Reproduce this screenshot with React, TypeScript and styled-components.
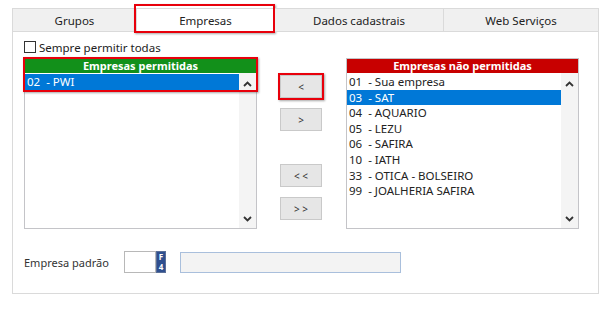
import styled, { createGlobalStyle } from "styled-components";

const GlobalStyle = createGlobalStyle`
  body {
    margin: 0;
    background: #ffffff;
    font-family: "Noto Sans", "Open Sans", sans-serif;
    color: #222222;
  }
`;

const tabs = [
  { label: "Grupos", width: 125 },
  { label: "Empresas", width: 138, active: true },
  { label: "Dados cadastrais", width: 169 },
  { label: "Web Serviços", width: 155 },
];

const permitted = [{ code: "02", name: "PWI", selected: true }];

const notPermitted = [
  { code: "01", name: "Sua empresa" },
  { code: "03", name: "SAT", selected: true },
  { code: "04", name: "AQUARIO" },
  { code: "05", name: "LEZU" },
  { code: "06", name: "SAFIRA" },
  { code: "10", name: "IATH" },
  { code: "33", name: "OTICA - BOLSEIRO" },
  { code: "99", name: "JOALHERIA SAFIRA" },
];

type Company = { code: string; name: string; selected?: boolean };

function Chevron({ up }: { up?: boolean }) {
  return (
    <svg width="9" height="6" viewBox="0 0 9 6">
      <path
        d={up ? "M1 5 L4.5 1.5 L8 5" : "M1 1 L4.5 4.5 L8 1"}
        fill="none"
        stroke="#333"
        strokeWidth="1.8"
      />
    </svg>
  );
}

function CompanyList({
  title,
  color,
  items,
  marked,
}: {
  title: string;
  color: string;
  items: Company[];
  marked?: boolean;
}) {
  return (
    <ListBox>
      <ListHeader $color={color}>{title}</ListHeader>
      <ListBody>
        <Rows>
          {items.map((item) => (
            <Row key={item.code} $selected={item.selected}>
              {item.code}&nbsp;&nbsp;- {item.name}
            </Row>
          ))}
        </Rows>
        <ScrollBar>
          <Chevron up />
          <Chevron />
        </ScrollBar>
      </ListBody>
      {marked && <ListMark />}
    </ListBox>
  );
}

function App() {
  return (
    <>
      <GlobalStyle />
      <Page>
        <TabStrip>
          {tabs.map((tab) => (
            <Tab key={tab.label} $width={tab.width} $active={tab.active}>
              {tab.label}
              {tab.active && <TabMark />}
            </Tab>
          ))}
        </TabStrip>

        <Panel>
          <CheckRow>
            <CheckBox />
            Sempre permitir todas
          </CheckRow>

          <ListsRow>
            <CompanyList
              title="Empresas permitidas"
              color="#12901a"
              items={permitted}
              marked
            />

            <ButtonColumn>
              <MoveButton>
                &lt;
                <ButtonMark />
              </MoveButton>
              <MoveButton>&gt;</MoveButton>
              <MoveButton $spaced>&lt; &lt;</MoveButton>
              <MoveButton>&gt; &gt;</MoveButton>
            </ButtonColumn>

            <CompanyList
              title="Empresas não permitidas"
              color="#c80000"
              items={notPermitted}
            />
          </ListsRow>

          <DefaultRow>
            <FieldLabel>Empresa padrão</FieldLabel>
            <CodeInput />
            <KeyButton>
              <span>F</span>
              <span>4</span>
            </KeyButton>
            <NameField />
          </DefaultRow>
        </Panel>
      </Page>
    </>
  );
}

export default App;

const Page = styled.div`
  padding: 8px 0 0 12px;
  width: 587px;
`;

const TabStrip = styled.div`
  display: flex;
  height: 24px;
`;

const Tab = styled.div<{ $width: number; $active?: boolean }>`
  position: relative;
  flex: 0 0 ${(p) => p.$width}px;
  box-sizing: border-box;
  display: flex;
  align-items: center;
  justify-content: center;
  background: ${(p) => (p.$active ? "#ffffff" : "#f0f0f0")};
  border: 1px solid #dadada;
  border-left: none;
  border-bottom: ${(p) => (p.$active ? "1px solid #ffffff" : "1px solid #dadada")};
  font-size: 11.5px;
  color: #222;

  &:first-child {
    border-left: 1px solid #dadada;
  }
`;

const RedBox = styled.div`
  position: absolute;
  border: 2.5px solid #e8000b;
  box-shadow: 1px 1px 2px rgba(0, 0, 0, 0.35);
  pointer-events: none;
`;

const TabMark = styled(RedBox)`
  top: -5px;
  left: -3px;
  right: -1px;
  bottom: -2px;
`;

const Panel = styled.div`
  box-sizing: border-box;
  height: 262px;
  border: 1px solid #dadada;
  border-top: none;
  padding: 9px 0 0 11px;
`;

const CheckRow = styled.label`
  display: flex;
  align-items: center;
  gap: 3px;
  height: 12px;
  font-size: 11.5px;
  color: #222;
`;

const CheckBox = styled.span`
  box-sizing: border-box;
  width: 12px;
  height: 12px;
  border: 1px solid #333;
  background: #fff;
`;

const ListsRow = styled.div`
  display: flex;
  margin-top: 5px;
`;

const ListBox = styled.div`
  position: relative;
  box-sizing: border-box;
  width: 233px;
  height: 171px;
  border: 1px solid #c4c4c8;
  display: flex;
  flex-direction: column;
`;

const ListMark = styled(RedBox)`
  top: -2px;
  left: -2px;
  right: -2px;
  height: 31px;
`;

const ListHeader = styled.div<{ $color: string }>`
  height: 14px;
  line-height: 14px;
  background: ${(p) => p.$color};
  color: #ffffff;
  font-size: 11px;
  font-weight: 700;
  text-align: center;
`;

const ListBody = styled.div`
  flex: 1;
  display: flex;
`;

const Rows = styled.div`
  flex: 1;
  padding-top: 1px;
`;

const Row = styled.div<{ $selected?: boolean }>`
  height: 15.6px;
  line-height: 15.6px;
  padding-left: 2px;
  font-size: 11.5px;
  white-space: nowrap;
  background: ${(p) => (p.$selected ? "#0078d7" : "transparent")};
  color: ${(p) => (p.$selected ? "#ffffff" : "#222222")};
`;

const ScrollBar = styled.div`
  width: 17px;
  background: #f4f4f4;
  display: flex;
  flex-direction: column;
  justify-content: space-between;
  align-items: center;
  padding: 8px 0 6px;
`;

const ButtonColumn = styled.div`
  width: 42px;
  margin: 0 24px 0 23px;
  padding-top: 17px;
  display: flex;
  flex-direction: column;
  gap: 10px;
`;

const MoveButton = styled.div<{ $spaced?: boolean }>`
  position: relative;
  box-sizing: border-box;
  height: 23px;
  margin-top: ${(p) => (p.$spaced ? "23px" : "0")};
  background: #e6e6e6;
  border: 1px solid #c9c9c9;
  display: flex;
  align-items: center;
  justify-content: center;
  font-size: 10px;
  color: #333;
`;

const ButtonMark = styled(RedBox)`
  top: -3px;
  left: -3px;
  right: -3px;
  bottom: -3px;
`;

const DefaultRow = styled.div`
  display: flex;
  align-items: center;
  margin-top: 22px;
  height: 22px;
`;

const FieldLabel = styled.span`
  width: 100px;
  font-size: 11px;
  color: #333;
`;

const CodeInput = styled.div`
  box-sizing: border-box;
  width: 32px;
  height: 22px;
  border: 1px solid #b8b8b8;
  background: #fff;
`;

const KeyButton = styled.div`
  box-sizing: border-box;
  width: 10px;
  height: 22px;
  background: #2f4f8f;
  border: 1px solid #5a6f98;
  color: #ffffff;
  font-size: 8px;
  font-weight: 700;
  line-height: 10px;
  display: flex;
  flex-direction: column;
  align-items: center;
  justify-content: center;
`;

const NameField = styled.div`
  box-sizing: border-box;
  width: 221px;
  height: 21px;
  margin-left: 14px;
  border: 1px solid #a9bfdc;
  background: #f3f3f3;
`;
